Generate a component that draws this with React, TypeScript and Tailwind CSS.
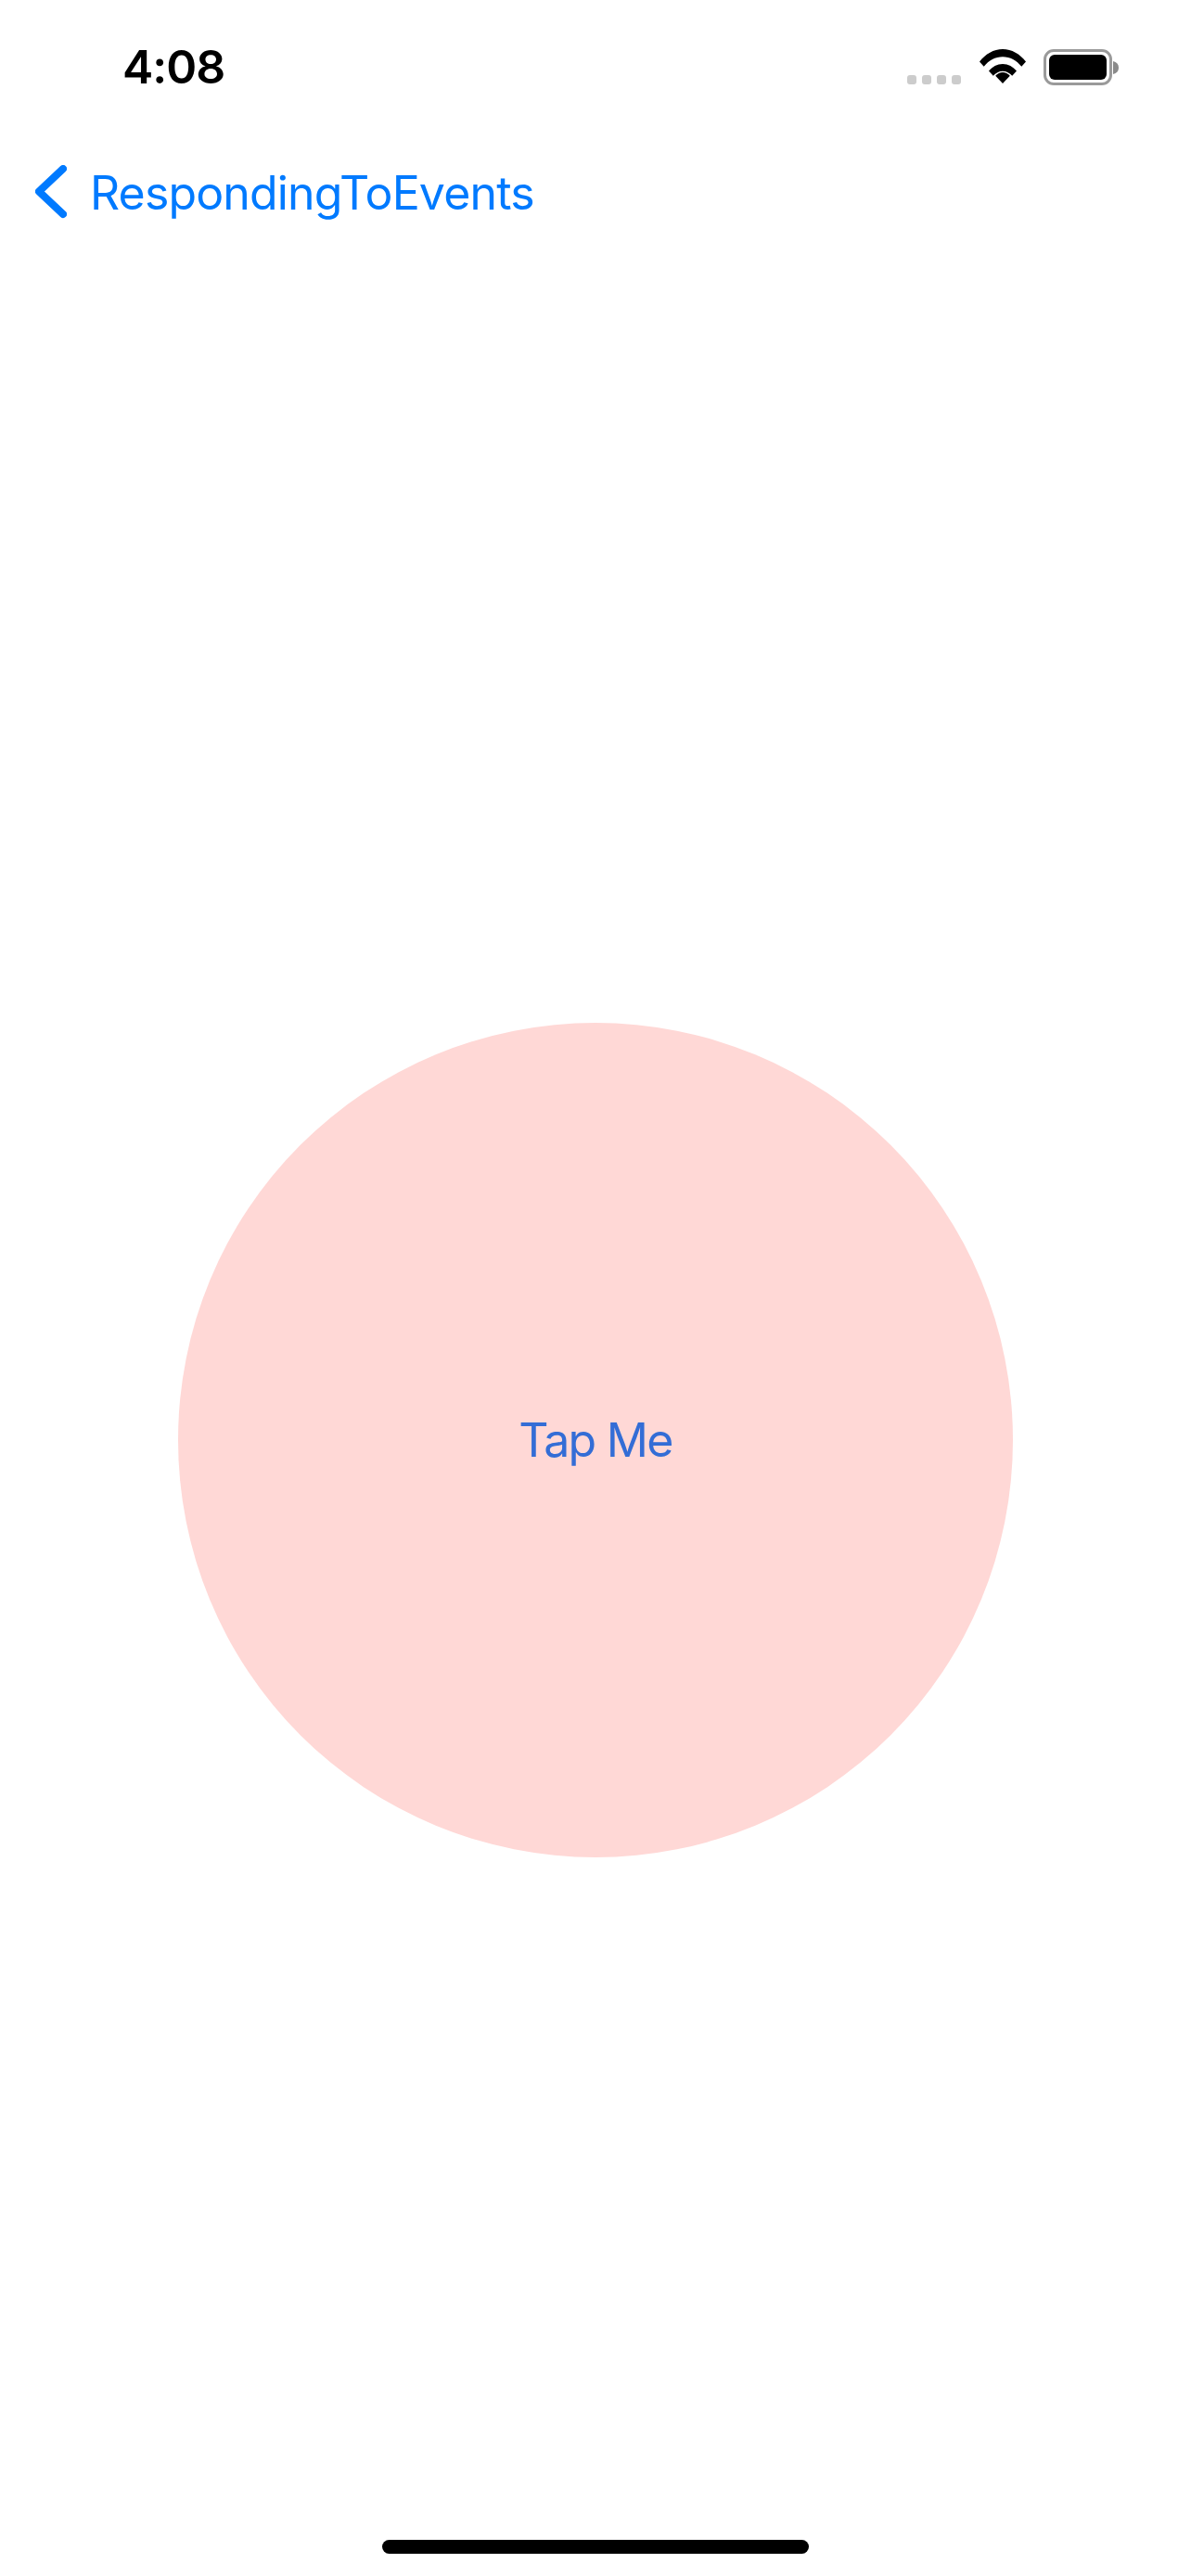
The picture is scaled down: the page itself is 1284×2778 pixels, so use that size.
const sans = "font-['Inter','Liberation_Sans',sans-serif]"

function SignalDots() {
    return (
        <div className="flex gap-[6px] mt-[28px]">
            {[0, 1, 2, 3].map((i) => (
                <div key={i} className="w-[10px] h-[10px] rounded-[3px] bg-[#cccccc]" />
            ))}
        </div>
    )
}

function Wifi() {
    return (
        <svg width="50" height="37" viewBox="0 0 50 37" className="ml-[20px]">
            <path d="M0 13.500C6.500 5.200 15.200 0 25 0s18.500 5.200 25 13.500l-4.700 5.300C40 12.300 33 8.300 25 8.300S10 12.300 4.700 18.800z" fill="#000" />
            <path d="M10 23.500C13.800 19 19 16 25 16s11.200 3 15 7.500l-4.800 5.300C32.600 25.800 29 23.800 25 23.800s-7.600 2-10.200 5z" fill="#000" />
            <path d="M25 37l-7.800-8.200C19.300 26.500 22 25 25 25s5.700 1.500 7.800 3.800z" fill="#000" />
        </svg>
    )
}

function Battery() {
    return (
        <div className="flex items-center ml-[19px]">
            <div className="w-[74px] h-[39px] rounded-[11px] border-[3px] border-[#9a9a9a] p-[3px]">
                <div className="w-full h-full rounded-[6px] bg-black" />
            </div>
            <svg width="8" height="14" viewBox="0 0 8 14" className="ml-[1px]">
                <path d="M0 0c4 1 6 3.500 6 7s-2 6-6 7z" fill="#8a8a8a" />
            </svg>
        </div>
    )
}

export default function App() {
    return (
        <div className={`${sans} w-[1284px] h-[2778px] bg-white flex flex-col items-stretch overflow-hidden`}>
            {/* Status bar */}
            <div className="h-[141px] flex items-start justify-between pl-[132px] pr-[76px] pt-[42px]">
                <span className="text-[50px] leading-[60px] font-semibold tracking-[-1px] text-black">4:08</span>
                <div className="flex items-start pt-[11px]">
                    <SignalDots />
                    <Wifi />
                    <Battery />
                </div>
            </div>

            {/* Nav bar */}
            <div className="h-[132px] flex items-start pl-[38px] pt-[37px]">
                <svg width="34" height="58" viewBox="0 0 34 58" fill="none">
                    <path d="M30 4L4 28.500 30 53" stroke="#007aff" strokeWidth="8" strokeLinecap="round" strokeLinejoin="round" />
                </svg>
                <span className="ml-[25px] text-[50px] leading-[60px] tracking-[-0.85px] text-[#007aff]">RespondingToEvents</span>
            </div>

            {/* Tap target */}
            <div className="flex justify-center mt-[830px]">
                <div className="w-[900px] h-[900px] rounded-full bg-[#ffd8d6] flex items-center justify-center">
                    <span className="text-[50px] leading-[60px] tracking-[-1.7px] text-[#336dd6]">Tap Me</span>
                </div>
            </div>

            {/* Home indicator */}
            <div className="flex justify-center mt-[736px]">
                <div className="w-[460px] h-[15px] rounded-full bg-black" />
            </div>
        </div>
    )
}
